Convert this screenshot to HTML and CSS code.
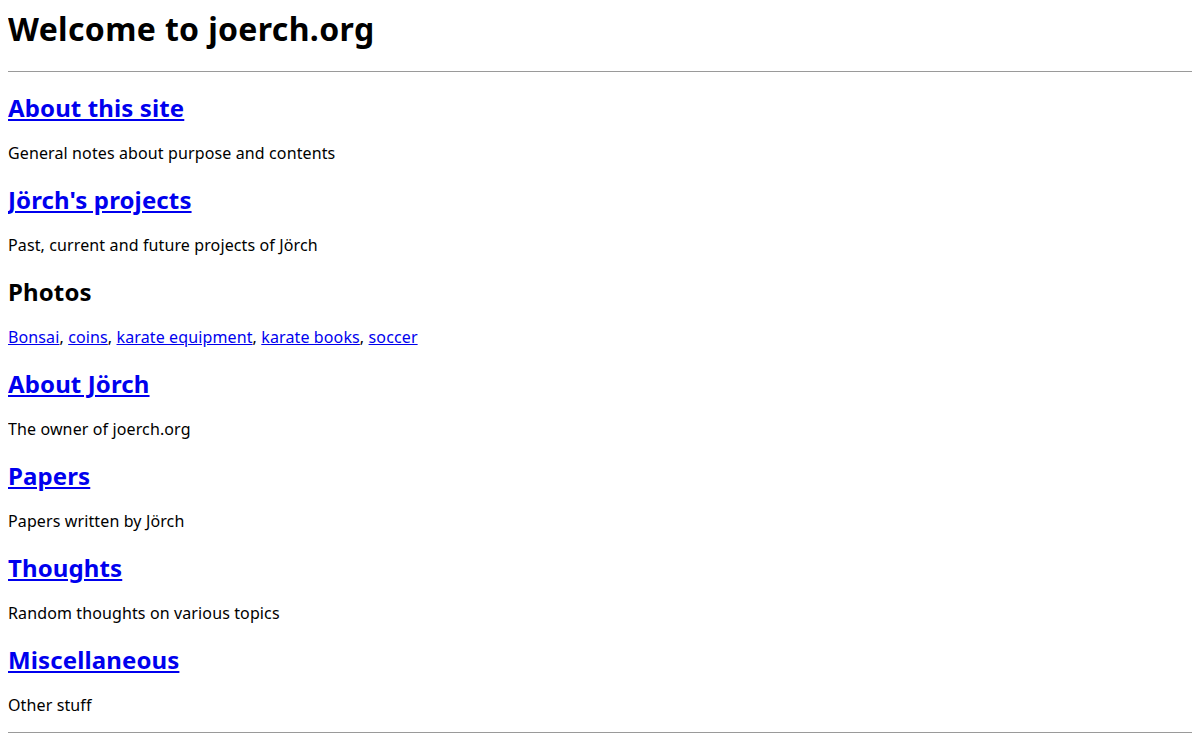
FILE: index.html
```html
<!DOCTYPE html>
<html lang="en">

<head>
  <meta charset="UTF-8">
  <title>joerch.org</title>
  <link rel="stylesheet" href="styles.css">
</head>

<body>
  <h1>Welcome to joerch.org</h1>
  <hr>

  <h2><a href="#about">About this site</a></h2>
  <p>General notes about purpose and contents</p>

  <h2><a href="#projects">Jörch's projects</a></h2>
  <p>Past, current and future projects of Jörch</p>

  <h2>Photos</h2>
  <p><a href="#bonsai">Bonsai</a>, <a href="#coins">coins</a>, <a href="#karate-equipment">karate equipment</a>, <a href="#karate-books">karate books</a>, <a href="#soccer">soccer</a></p>

  <h2><a href="#joerch">About Jörch</a></h2>
  <p>The owner of joerch.org</p>

  <h2><a href="#papers">Papers</a></h2>
  <p>Papers written by Jörch</p>

  <h2><a href="#thoughts">Thoughts</a></h2>
  <p>Random thoughts on various topics</p>

  <h2><a href="#misc">Miscellaneous</a></h2>
  <p>Other stuff</p>

  <hr>
</body>

</html>
```

FILE: styles.css
```css
body {
  font-family: "Noto Sans", sans-serif;
  color: #000;
  background: #fff;
  margin: 8px;
}

h1 {
  font-size: 32px;
  line-height: 42px;
  letter-spacing: 0.35px;
  margin: 0 0 21px;
}

h2 {
  font-size: 24px;
  line-height: 31px;
  letter-spacing: 0.12px;
  margin: 20px 0;
}

p {
  font-size: 16px;
  line-height: 21px;
  letter-spacing: 0.12px;
  margin: 16px 0;
}

a {
  color: #0000ee;
}

hr {
  border: 0;
  border-top: 1px solid #9a9a9a;
  margin: 8px 0;
}
```
